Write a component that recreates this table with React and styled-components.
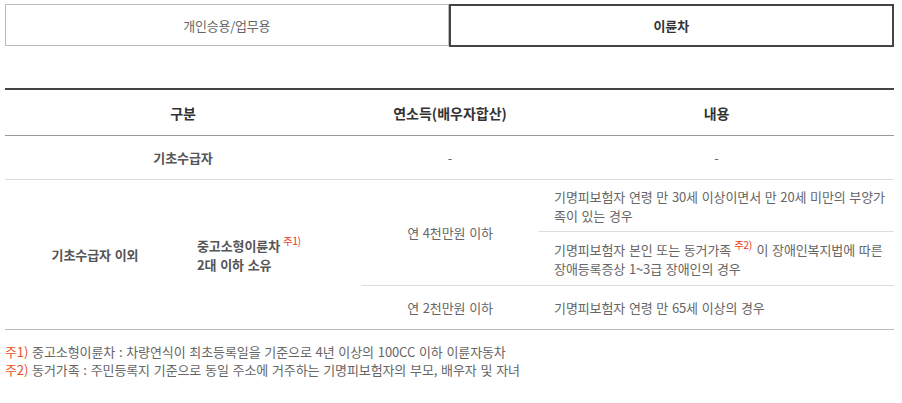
import React from 'react';
import styled, { createGlobalStyle } from 'styled-components';

const GlobalStyle = createGlobalStyle`
    html, body {
        margin: 0;
        background: #fff;
    }
    body {
        font-family: "Noto Sans CJK KR", "Noto Sans", sans-serif;
        color: #666;
    }
`;

const Page = styled.div`
    width: 889px;
    padding: 4px 0 0 5px;
`;

const Tabs = styled.div`
    display: flex;
    height: 43px;
`;

const Tab = styled.button`
    flex: 1;
    display: flex;
    align-items: center;
    justify-content: center;
    background: #fff;
    font-family: inherit;
    font-size: 13px;
    letter-spacing: -0.2px;
    padding: 0;
    color: ${(p) => (p.active ? '#333' : '#666')};
    font-weight: ${(p) => (p.active ? 700 : 400)};
    border: ${(p) => (p.active ? '2px solid #444' : '1px solid #bbb')};
    height: ${(p) => (p.active ? '43px' : '42px')};
`;

const Table = styled.table`
    width: 889px;
    margin-top: 41px;
    border-collapse: collapse;
    border-top: 2px solid #444;
    border-bottom: 1px solid #bbb;
    table-layout: fixed;
    font-size: 13px;
    letter-spacing: -0.1px;
    word-spacing: 0.9px;
`;

const Th = styled.th`
    height: 45px;
    padding: 0;
    font-size: 14px;
    font-weight: 700;
    letter-spacing: 0;
    color: #333;
    border-bottom: 1px solid #999;
`;

const Td = styled.td`
    padding: ${(p) => (p.left ? '0 5px 0 15px' : '0')};
    height: ${(p) => p.h || 'auto'};
    text-align: ${(p) => (p.left ? 'left' : 'center')};
    line-height: 19px;
    color: ${(p) => (p.strong ? '#555' : '#666')};
    font-weight: ${(p) => (p.strong ? 700 : 400)};
    border-bottom: ${(p) => (p.last ? 'none' : '1px solid #ddd')};
    vertical-align: middle;
`;

const NameCell = styled(Td)`
    padding-left: ${(p) => (p.left ? '12px' : '0')};
    letter-spacing: -0.1px;
`;

const Sup = styled.sup`
    display: inline-block;
    color: #e8421f;
    font-size: 10.5px;
    line-height: 10px;
    font-weight: 400;
    letter-spacing: -0.5px;
    vertical-align: top;
    margin: 0 1px 0 3px;
`;

const Notes = styled.div`
    margin-top: 13px;
    font-size: 13px;
    line-height: 18px;
    letter-spacing: -0.1px;
    word-spacing: 1px;
    color: #666;
`;

const Mark = styled.span`
    color: #e8501e;
`;

const App = () => {
    return (
        <Page>
            <GlobalStyle />
            <Tabs>
                <Tab>개인승용/업무용</Tab>
                <Tab active>이륜차</Tab>
            </Tabs>
            <Table>
                <colgroup>
                    <col style={{ width: 180 }} />
                    <col style={{ width: 176 }} />
                    <col style={{ width: 178 }} />
                    <col style={{ width: 355 }} />
                </colgroup>
                <thead>
                    <tr>
                        <Th colSpan={2}>구분</Th>
                        <Th>연소득(배우자합산)</Th>
                        <Th>내용</Th>
                    </tr>
                </thead>
                <tbody>
                    <tr>
                        <Td colSpan={2} strong h="43px">기초수급자</Td>
                        <Td>-</Td>
                        <Td>-</Td>
                    </tr>
                    <tr>
                        <NameCell rowSpan={3} strong last>기초수급자 이외</NameCell>
                        <NameCell rowSpan={3} strong last left>
                            중고소형이륜차<Sup>주1)</Sup>
                            <br />
                            2대 이하 소유
                        </NameCell>
                        <Td rowSpan={2}>연 4천만원 이하</Td>
                        <Td left h="51px">
                            기명피보험자 연령 만 30세 이상이면서 만 20세 미만의 부양가족이 있는 경우
                        </Td>
                    </tr>
                    <tr>
                        <Td left h="53px">
                            기명피보험자 본인 또는 동거가족<Sup>주2)</Sup> 이 장애인복지법에 따른 장애등록증상 1~3급 장애인의 경우
                        </Td>
                    </tr>
                    <tr>
                        <Td last h="43px">연 2천만원 이하</Td>
                        <Td left last>기명피보험자 연령 만 65세 이상의 경우</Td>
                    </tr>
                </tbody>
            </Table>
            <Notes>
                <div><Mark>주1)</Mark> 중고소형이륜차 : 차량연식이 최초등록일을 기준으로 4년 이상의 100CC 이하 이륜자동차</div>
                <div><Mark>주2)</Mark> 동거가족 : 주민등록지 기준으로 동일 주소에 거주하는 기명피보험자의 부모, 배우자 및 자녀</div>
            </Notes>
        </Page>
    );
};

export default App;
